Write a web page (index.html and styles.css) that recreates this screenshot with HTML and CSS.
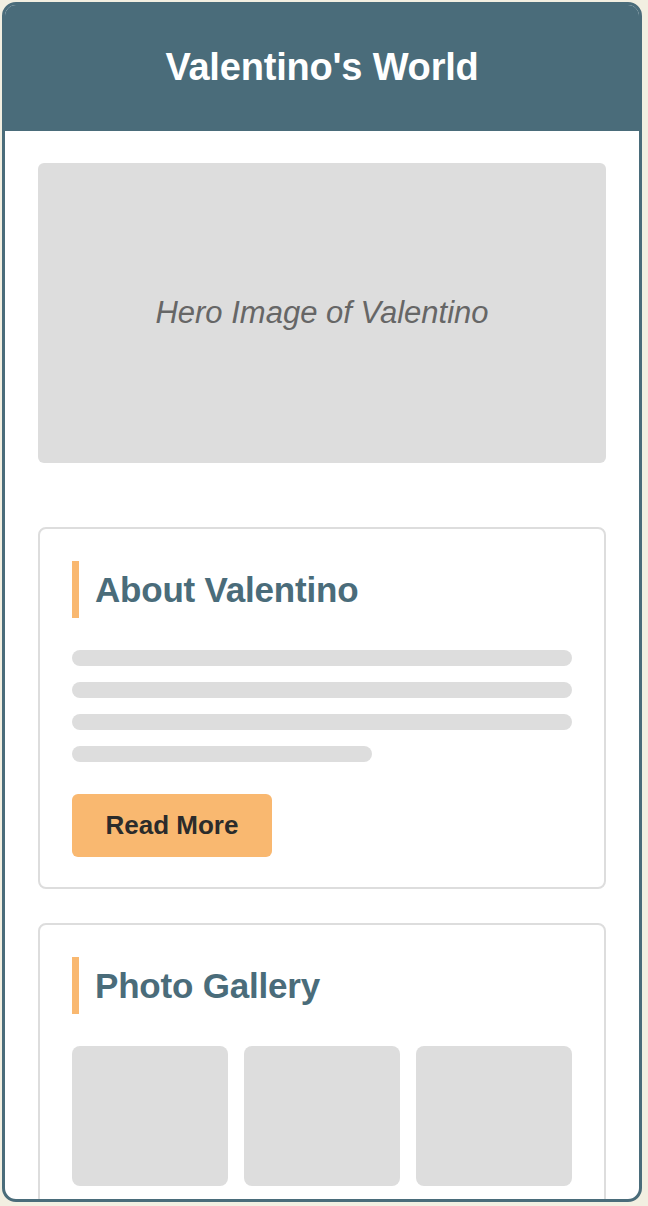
FILE: index.html
```html
<!DOCTYPE html>
<html lang="en">
<head>
<meta charset="utf-8">
<title>Valentino's World</title>
<link rel="stylesheet" href="styles.css">
</head>
<body>
<div class="frame">
  <header class="top">
    <h1 class="title">Valentino's World</h1>
  </header>
  <main class="content">
    <div class="hero">Hero Image of Valentino</div>
    <section class="card">
      <h2 class="card-title">About Valentino</h2>
      <div class="lines">
        <div class="line"></div>
        <div class="line"></div>
        <div class="line"></div>
        <div class="line short"></div>
      </div>
      <button class="btn">Read More</button>
    </section>
    <section class="card">
      <h2 class="card-title">Photo Gallery</h2>
      <div class="gallery">
        <div class="tile"></div>
        <div class="tile"></div>
        <div class="tile"></div>
        <div class="tile"></div>
        <div class="tile"></div>
        <div class="tile"></div>
      </div>
    </section>
  </main>
</div>
</body>
</html>
```

FILE: styles.css
```css
html, body {
  margin: 0;
  padding: 0;
  background: #f2efe1;
  font-family: "Liberation Sans", Arial, sans-serif;
}

.frame {
  box-sizing: border-box;
  margin: 2px;
  width: 640px;
  height: 1200px;
  border: 3px solid #4a6c7a;
  border-radius: 14px;
  background: #ffffff;
  overflow: hidden;
}

.top {
  background: #4a6c7a;
  height: 126px;
  display: flex;
  align-items: center;
  justify-content: center;
}

.title {
  margin: 0;
  color: #ffffff;
  font-size: 38px;
  font-weight: 700;
  line-height: 1;
  padding-bottom: 2px;
  letter-spacing: -0.2px;
}

.content {
  padding: 32px 33px 0 33px;
  display: flex;
  flex-direction: column;
}

.hero {
  height: 300px;
  background: #dddddd;
  border-radius: 6px;
  display: flex;
  align-items: center;
  justify-content: center;
  color: #666666;
  font-style: italic;
  font-size: 31px;
  margin-bottom: 64px;
}

.card {
  border: 2px solid #dddddd;
  border-radius: 8px;
  padding: 32px 32px 30px 32px;
  margin-bottom: 34px;
}

.card-title {
  margin: 0;
  border-left: 7px solid #f9b870;
  padding: 8px 0 8px 16px;
  line-height: 41px;
  font-size: 35px;
  font-weight: 700;
  color: #4a6c7a;
  letter-spacing: -0.2px;
}

.lines {
  margin-top: 32px;
  display: flex;
  flex-direction: column;
  gap: 16px;
}

.line {
  height: 16px;
  border-radius: 8px;
  background: #dddddd;
}

.line.short {
  width: 60%;
}

.btn {
  display: block;
  margin-top: 32px;
  width: 200px;
  height: 63px;
  border: none;
  border-radius: 6px;
  background: #f9b870;
  color: #2b2b2b;
  font-family: "Liberation Sans", Arial, sans-serif;
  font-size: 26px;
  font-weight: 700;
  cursor: pointer;
}

.gallery {
  margin-top: 32px;
  display: grid;
  grid-template-columns: repeat(3, 1fr);
  gap: 16px;
}

.tile {
  height: 140px;
  border-radius: 8px;
  background: #dddddd;
}
```
